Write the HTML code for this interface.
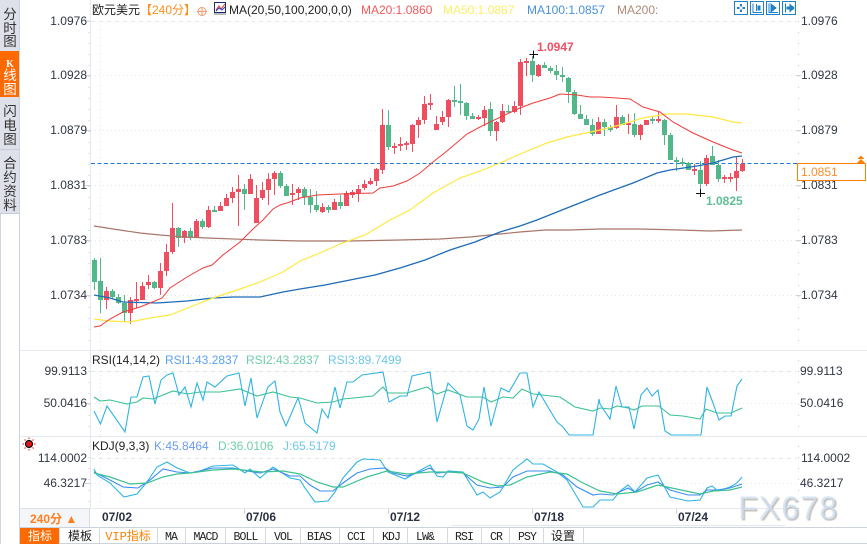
<!DOCTYPE html>
<html>
<head>
<meta charset="utf-8">
<style>
html,body{margin:0;padding:0;background:#fff;width:867px;height:544px;overflow:hidden}
svg{display:block;position:absolute;left:0;top:0}
text{font-family:"Liberation Sans","Noto Sans CJK SC",sans-serif;font-size:12px;fill:#2f3646}
.c{font-family:"Liberation Sans","Noto Sans CJK SC",sans-serif;font-size:13.500px;fill:#333;text-anchor:middle}
.t{font-family:"Liberation Mono","Noto Sans CJK SC",monospace;font-size:11.500px;letter-spacing:-.9px;fill:#222;text-anchor:middle}
.z{font-size:12px;fill:#222;text-anchor:middle;letter-spacing:0}
.b{font-weight:bold}
.e{text-anchor:end}
.wm{position:absolute;left:738px;top:490px;font:32px/36px "Liberation Sans",sans-serif;letter-spacing:1.2px;color:rgba(208,224,242,.8);text-shadow:1.5px 1.5px 1px rgba(150,140,130,.55)}
</style>
</head>
<body>
<svg width="867" height="544" viewBox="0 0 867 544">
<!-- sidebar -->
<rect x="0" y="0" width="20" height="213" fill="#dfe1ea"/>
<rect x="0" y="51" width="19" height="46" fill="#ff6a00"/>
<rect x="0" y="149" width="20" height="1" fill="#c8ccd6"/>
<rect x="0" y="213" width="20" height="1" fill="#c8ccd6"/>
<rect x="0" y="214" width="1" height="330" fill="#d2d8e2"/>
<rect x="19" y="0" width="1" height="544" fill="#cdd3dd"/>
<text class="c" x="10" y="19">分</text><text class="c" x="10" y="33">时</text><text class="c" x="10" y="46">图</text>
<text class="c" x="10" y="67" style="fill:#fff;font-family:'Liberation Serif',serif;font-weight:bold;font-size:10px">K</text><text class="c" x="10" y="80" style="fill:#fff">线</text><text class="c" x="10" y="94" style="fill:#fff">图</text>
<text class="c" x="10" y="116">闪</text><text class="c" x="10" y="130">电</text><text class="c" x="10" y="144">图</text>
<text class="c" x="10" y="168">合</text><text class="c" x="10" y="182">约</text><text class="c" x="10" y="196">资</text><text class="c" x="10" y="210">料</text>

<!-- frame lines -->
<path d="M20 350.500H867M20 436.500H867M90 508.500H800" stroke="#e6e9ee" fill="none"/>
<path d="M90.500 0V508" stroke="#e3e8f0" fill="none"/>
<!-- ticks -->
<path d="M89 21V350M89 360V436M89 446V508M798.500 21V350M798.500 360V436M798.500 446V508" stroke="#c4cad4" stroke-dasharray="1 10" fill="none"/>
<path d="M85 21H90M85 75.500H90M85 130.500H90M85 185.500H90M85 240.500H90M85 295.500H90M85 403.500H90M85 483.500H90M795 75.500H801M795 130.500H801M795 185.500H801M795 240.500H801M795 295.500H801" stroke="#cfd5de" fill="none"/>
<!-- grid -->
<path d="M91 21.500H797" stroke="#e8e8e8" stroke-dasharray="4 4" fill="none"/>
<path d="M91 75.500H797M91 130.500H797M91 185.500H797M91 240.500H797M91 295.500H797M91 403.500H797M91 483.500H797" stroke="#e6e6e6" stroke-dasharray="1 3" fill="none"/>
<path d="M91 371.500H797M91 458.500H797" stroke="#e6e6e6" stroke-dasharray="4 4" fill="none"/>
<path d="M100.500 21V350M100.500 351V436M100.500 437V508" stroke="#e6e6e6" stroke-dasharray="1 3" fill="none"/>

<!-- current price line -->
<path d="M91 163.500H797" stroke="#1e78e0" stroke-dasharray="4 2.500" fill="none"/>

<!-- candles: wicks + bodies -->
<g shape-rendering="crispEdges" fill="none">
<path stroke="#52b88a" stroke-width="1" d="M94.500 258V290M100.500 258V313M112.500 289V298M118.500 294V304M124.500 295V322M154.500 281V289M178.500 227V247M190.500 228V240M202.500 219V229M214.500 206V212M244.500 184V210M280.500 171V188M286.500 184V196M304.500 187V205M310.500 189V213M316.500 191V212M328.500 205V213M340.500 195V209M388.500 110V150M454.500 86V107M460.500 84V115M466.500 102V120M472.500 113V119M490.500 102V136M508.500 105V113M532.500 56V82M544.500 62V68M550.500 66V73M556.500 65V80M562.500 67V82M568.500 77V103M574.500 90V115M580.500 105V119M586.500 115V125M592.500 119V136M604.500 119V136M610.500 125V132M622.500 115V125M634.500 113V137M652.500 117V124M664.500 119V145M670.500 133V160M676.500 157V171M682.500 158V166M688.500 162V170M700.500 161V192M712.500 146V165M718.500 160V182"/>
<path stroke="#52b88a" stroke-width="5" d="M94.500 260V282M100.500 281V300M112.500 291V297M118.500 297V303M124.500 303V313M154.500 282V288M178.500 228V238M190.500 231V238M202.500 221V227M214.500 210V212M244.500 189V194M280.500 173V186M286.500 186V196M304.500 189V197M310.500 197V205M316.500 205V210M328.500 207V210M340.500 202V206M388.500 125V147M454.500 100V102M460.500 101V103M466.500 103V116M472.500 116V119M490.500 109V131M508.500 111V112.500M532.500 61V75M544.500 65V68M550.500 68V71M556.500 71V75M562.500 75V77M568.500 78V92M574.500 92V114M580.500 114V119M586.500 119V125M592.500 125V134M604.500 122V127M610.500 127V130M622.500 117V125M634.500 124V135M652.500 119V121M664.500 120V135M670.500 135V160M676.500 160V162M682.500 162V164M688.500 163V170M700.500 170V184M712.500 156V165M718.500 165V179"/>
<path stroke="#ef4e60" stroke-width="1" d="M106.500 287V309M130.500 297V324M136.500 282V308M142.500 282V300M148.500 275V289M160.500 263V295M166.500 244V276M172.500 203V254M184.500 230V243M196.500 219V238M208.500 206V228M220.500 202V211M226.500 194V206M232.500 187V203M238.500 175V226M250.500 174V194M256.500 185V223M262.500 182V200M268.500 173V205M274.500 171V195M292.500 184V205M298.500 187V200M322.500 203V213M334.500 199V210M346.500 191V206M352.500 190V198M358.500 185V202M364.500 180V190M370.500 178V185M376.500 168V186M382.500 109V174M394.500 143V154M400.500 137V151M406.500 141V150M412.500 124V152M418.500 117V138M424.500 96V124M430.500 94V110M436.500 116V130M442.500 111V125M448.500 99V127M478.500 115V120M484.500 106V126M496.500 121V141M502.500 104V123M514.500 101V113M520.500 59V115M526.500 58V76M538.500 64V77M598.500 117V134M616.500 105V129M628.500 114V134M640.500 124V140M646.500 120V125M658.500 111V123M694.500 164V175M706.500 155V186M724.500 175V183M730.500 173V182M736.500 157V191M742.500 159V172"/>
<path stroke="#ef4e60" stroke-width="5" d="M106.500 291V300M130.500 300V313M136.500 299V301M142.500 286V300M148.500 282V285M160.500 271V288M166.500 252V271M172.500 228V252M184.500 231V238M196.500 221V238M208.500 210V227M220.500 206V211M226.500 198V206M232.500 192V198M238.500 189V192M250.500 179V194M256.500 198V223M262.500 190V198M268.500 179V190M274.500 173V179M292.500 193V195M298.500 189V193M322.500 207V212M334.500 202V210M346.500 193V206M352.500 192V195M358.500 189V193M364.500 184V188M370.500 181V184M376.500 169V181M382.500 125V170M394.500 146V148M400.500 144V146M406.500 143V145M412.500 125V144M418.500 120V125M424.500 104V120M430.500 103V105M436.500 124V130M442.500 117V122M448.500 100V117M478.500 117V119M484.500 110V118M496.500 122V131M502.500 111V122M514.500 106V112M520.500 62V106M526.500 61V63M538.500 65V76M598.500 122V134M616.500 117V128M628.500 123V125M640.500 125V135M646.500 120V125M658.500 119V121M694.500 169V171M706.500 158V184M724.500 177V179M730.500 177V179M736.500 171V178M742.500 164V171"/>
</g>

<!-- MA200 -->
<polyline fill="none" stroke="#a8766a" stroke-width="1.200" points="94,226 113,229 140,233 160,235 185,237 207,238 260,240 300,241 350,241 400,240 440,239 470,237 500,234 520,232 545,230 570,230 600,229 640,229 680,230 710,231 742,230"/>
<!-- MA100 -->
<polyline fill="none" stroke="#1e6cb8" stroke-width="1.300" points="94,295 110,298 123,302 157,303 187,301 213,298 233,297 260,297 283,292 300,289 325,285 350,280 375,275 400,268 425,260 450,250 475,242 500,232 520,226 537,220 567,208 600,195 633,183 657,173 670,170 697,166 713,163 733,157 742,156"/>
<!-- MA50 -->
<polyline fill="none" stroke="#ffe840" stroke-width="1.200" points="94,319 110,321 130,322 150,318 170,315 190,307 213,298 240,289 260,282 283,272 300,261 320,253 340,244 365,235 390,220 410,210 433,193 460,178 480,171 500,163 520,154 547,143 567,137 600,130 620,125 643,118 667,114 687,114 713,117 733,122 742,123"/>
<!-- MA20 -->
<polyline fill="none" stroke="#f03c3c" stroke-width="1" points="94,327 100,326 110,319 123,312 140,307 150,303 162,298 170,288 187,277 203,268 212,265 223,255 240,242 253,229 263,220 273,209 280,205 290,202 300,198 317,195 340,194 373,193 380,188 393,186 407,181 420,173 433,162 447,151 467,134 480,127 490,122 520,108 533,103 550,98 560,94 577,95 590,97 600,97 617,98 630,99 643,107 660,112 673,122 693,133 713,142 733,150 742,153"/>

<!-- RSI -->
<polyline fill="none" stroke="#3cc28f" stroke-width="1.100" points="94,397 100,401 110,400 127,404 137,402 143,398 153,399 173,391 187,394 200,392 220,392 240,389 257,396 273,392 290,397 300,398 317,403 333,402 343,399 373,396 383,387 388,393 407,393 427,387 437,394 448,390 467,397 483,397 491,402 503,397 513,398 522,389 533,394 560,397 575,407 593,411 600,408 610,409 617,406 628,408 634,410 642,406 659,406 670,415 683,416 700,419 706,409 717,413 731,413 742,408"/>
<polyline fill="none" stroke="#2fb4e4" stroke-width="1.100" points="94,411 100.500,424 107,406 125,432 131,397 137,397 143,377 149,376 155,404 161,380 167,375 173,373 179,395 185,387 191,407 197,383 203,400 207,382 215,387 227,376 239,373 245,406 251,378 257,418 268,387 275,381 280,412 286,426 298,398 300,404 305,423 317,433 322,409 328,418 335,387 340,408 347,382 353,382 362,375 383,372 389,402 400,396 407,396 412,376 430,372 437,422 448,383 460,395 467,426 473,430 479,419 484,387 491,426 501,388 509,392 520,373 527,373 533,407 539,392 557,422 563,427 569,435 593,435 599,399 600,404 610,419 616,386 622,407 629,407 634,429 641,395 647,388 652,396 658,390 665,431 671,435 701,435 707,387 713,403 719,420 725,416 731,416 737,386 742,379"/>

<!-- KDJ -->
<polyline fill="none" stroke="#2fb4e4" stroke-width="1.100" points="94,469 97,475 110,483 124,497 137,494 147,482 157,467 167,462 177,468 190,473 200,471 213,466 233,465 245,473 250,469 260,478 273,467 290,478 300,480 305,488 315,502 328,501 335,492 343,478 357,462 363,459 380,460 388,472 405,479 417,472 430,465 437,476 443,477 448,471 463,472 477,495 483,492 490,498 500,492 513,470 527,459 533,464 543,464 557,472 567,480 583,507 593,507 600,500 613,500 620,491 628,485 635,492 647,478 658,475 670,497 688,501 700,500 707,488 712,486 718,491 730,487 737,483 742,477"/>
<polyline fill="none" stroke="#3a8cf0" stroke-width="1.100" points="94,472 110,480 123,487 138,488 150,480 163,469 177,472 190,473 213,468 233,468 247,471 260,473 273,469 290,476 300,476 310,485 320,491 333,491 343,483 357,473 370,469 385,468 393,473 407,476 417,473 430,468 437,473 448,472 463,473 477,485 490,488 503,487 513,477 527,471 550,471 563,475 577,487 593,495 600,494 613,495 628,488 635,492 647,485 658,482 670,490 688,495 700,495 707,490 717,490 730,488 742,484"/>
<polyline fill="none" stroke="#3cc28f" stroke-width="1.200" points="94,473 110,477 130,484 147,483 163,477 177,474 190,473 213,470 233,469 263,472 283,471 300,474 317,482 333,487 343,487 367,477 387,471 407,474 430,472 450,472 463,473 483,482 497,486 510,485 527,477 550,472 567,474 583,483 600,491 617,494 637,492 658,485 667,487 700,494 713,491 730,490 742,487"/>

<!-- extreme markers -->
<path d="M529.500 54.500H538M533.500 50.500V58.500M696 193.500H705M700.500 189V197" stroke="#111" fill="none" shape-rendering="crispEdges"/>
<text x="537" y="51" class="b" style="fill:#ef5060">1.0947</text>
<text x="706" y="205" class="b" style="fill:#5fbf95">1.0825</text>

<!-- top legend -->
<text x="92" y="14" style="fill:#222">欧元美元</text>
<text x="140" y="14" style="fill:#ff8c1a">【240分】</text>
<circle cx="202" cy="11.500" r="4" fill="none" stroke="#f29a70"/><path d="M197 11.500H207M202 7V16" stroke="#f29a70" fill="none"/>
<rect x="214.500" y="2.500" width="11" height="10" fill="#fff" stroke="#1a2a6a"/><path d="M214 14H226" stroke="#777"/><path d="M216 10L219 6L221 9L225 4" fill="none" stroke="#e03030"/><path d="M216 11L219 8L222 10L225 7" fill="none" stroke="#2040c0"/>
<text x="229" y="14" style="fill:#222">MA(20,50,100,200,0,0)</text>
<text x="361" y="14" style="fill:#f25a5a">MA20:1.0860</text>
<text x="443" y="14" style="fill:#ffee66">MA50:1.0887</text>
<text x="527" y="14" style="fill:#4a90d8">MA100:1.0857</text>
<text x="617" y="14" style="fill:#b08a7a">MA200:</text>

<!-- top-right buttons -->
<g fill="none" stroke="#1e80c8" shape-rendering="crispEdges">
<rect x="734.500" y="1.500" width="13" height="13" stroke-width="1.300"/><rect x="750.500" y="1.500" width="13" height="13" stroke-width="1.300"/><rect x="766.500" y="1.500" width="13" height="13" stroke-width="1.300"/><rect x="782.500" y="1.500" width="13" height="13" stroke-width="1.300"/>
<path d="M741 4V6.500M741 9.500V12M737 8H739.500M742.500 8H745" stroke-width="2"/>
<path d="M753 3.500V12.500H762M756.500 4V11"/><path d="M758 6H760V10H758Z" fill="#1e80c8"/><path d="M760 5.500V10.500"/>
<path d="M769 3.500V12.500H778"/><path d="M771 4L776 8L771 12Z" fill="#1e80c8"/>
<path d="M785.500 3.500V12.500"/><path d="M787 7H790V4.500L794 8L790 11.500V9H787Z" fill="#1e80c8"/>
</g>

<!-- price labels left -->
<text class="e" x="87" y="25">1.0976</text>
<text class="e" x="87" y="79">1.0928</text>
<text class="e" x="87" y="134">1.0879</text>
<text class="e" x="87" y="189">1.0831</text>
<text class="e" x="87" y="244">1.0783</text>
<text class="e" x="87" y="299">1.0734</text>
<text class="e" x="87" y="375">99.9113</text>
<text class="e" x="87" y="407">50.0416</text>
<text class="e" x="87" y="462">114.0002</text>
<text class="e" x="87" y="487">46.3217</text>
<!-- price labels right -->
<text x="801" y="25">1.0976</text>
<text x="801" y="79">1.0928</text>
<text x="801" y="134">1.0879</text>
<text x="801" y="189">1.0831</text>
<text x="801" y="244">1.0783</text>
<text x="801" y="299">1.0734</text>
<text x="800" y="375">99.9113</text>
<text x="800" y="407">50.0416</text>
<text x="801" y="462">114.0002</text>
<text x="800" y="487">46.3217</text>

<!-- current price box -->
<rect x="797.500" y="163.500" width="68" height="17" fill="#fff" stroke="#ff8000"/>
<text x="801" y="176" style="fill:#ff8c2a">1.0851</text>
<path d="M857.500 159L861 155.500L864.500 159ZM857 163L861 159L865 163Z" fill="#ff8000"/>

<!-- RSI / KDJ legends -->
<text x="92" y="364" style="fill:#222">RSI(14,14,2)</text>
<text x="165" y="364" style="fill:#5aa2f0">RSI1:43.2837</text>
<text x="246" y="364" style="fill:#6ed0a8">RSI2:43.2837</text>
<text x="328" y="364" style="fill:#6cc8ee">RSI3:89.7499</text>
<text x="92" y="450" style="fill:#222">KDJ(9,3,3)</text>
<text x="154" y="450" style="fill:#6a9cf0">K:45.8464</text>
<text x="218" y="450" style="fill:#6ed0a8">D:36.0106</text>
<text x="283" y="450" style="fill:#6cc8ee">J:65.5179</text>

<!-- sun icon -->
<circle cx="29" cy="444" r="3.500" fill="#e01818" stroke="#111" stroke-width="1.200"/>
<path d="M29 437.500V439M29 449V450.500M22.500 444H24M34 444H35.500M24.500 439.500L25.500 440.500M33.500 439.500L32.500 440.500M24.500 448.500L25.500 447.500M33.500 448.500L32.500 447.500" stroke="#f01818" fill="none"/>

<!-- period box + dates -->
<rect x="20" y="509" width="70" height="18" fill="#f4f6fa"/>
<path d="M20.500 508.500H90M89.500 508V527" stroke="#d8dde6" fill="none"/>
<text x="30" y="523" class="b" style="fill:#ff7f1e;font-size:12px">240分 ▲</text>
<path d="M244.500 509V514M388.500 509V514M532.500 509V514M676.500 509V514" stroke="#ccd2dc" fill="none"/>
<text x="102" y="521" class="b" style="fill:#2a3040">07/02</text>
<text x="246" y="521" class="b" style="fill:#2a3040">07/06</text>
<text x="390" y="521" class="b" style="fill:#2a3040">07/12</text>
<text x="534" y="521" class="b" style="fill:#2a3040">07/18</text>
<text x="678" y="521" class="b" style="fill:#2a3040">07/24</text>

<!-- tabs -->
<path d="M452 525.500H785" stroke="#e4e8ee" fill="none"/>
<path d="M20 527.500H867M20 543.500H867" stroke="#cdd3dd" fill="none"/>
<rect x="20" y="528" width="39" height="16" fill="#ff6a00"/>
<path d="M59.500 528V543M99.500 528V543M157.500 528V543M185.500 528V543M225.500 528V543M265.500 528V543M300.500 528V543M339.500 528V543M373.500 528V543M407.500 528V543M447.500 528V543M481.500 528V543M509.500 528V543M543.500 528V543M583.500 528V543" stroke="#d4d9e2" fill="none"/>
<text class="t z" x="40" y="540" style="fill:#fff">指标</text>
<text class="t z" x="80" y="540">模板</text>
<text class="t z" x="128" y="540" style="fill:#ff8000">VIP指标</text>
<text class="t" x="171" y="540">MA</text>
<text class="t" x="205.500" y="540">MACD</text>
<text class="t" x="245.500" y="540">BOLL</text>
<text class="t" x="283" y="540">VOL</text>
<text class="t" x="319" y="540">BIAS</text>
<text class="t" x="356" y="540">CCI</text>
<text class="t" x="391" y="540">KDJ</text>
<text class="t" x="425" y="540">LW&amp;</text>
<text class="t" x="464" y="540">RSI</text>
<text class="t" x="496" y="540">CR</text>
<text class="t" x="527" y="540">PSY</text>
<text class="t z" x="563" y="540">设置</text>
</svg>
<div class="wm">FX678</div>
</body>
</html>
